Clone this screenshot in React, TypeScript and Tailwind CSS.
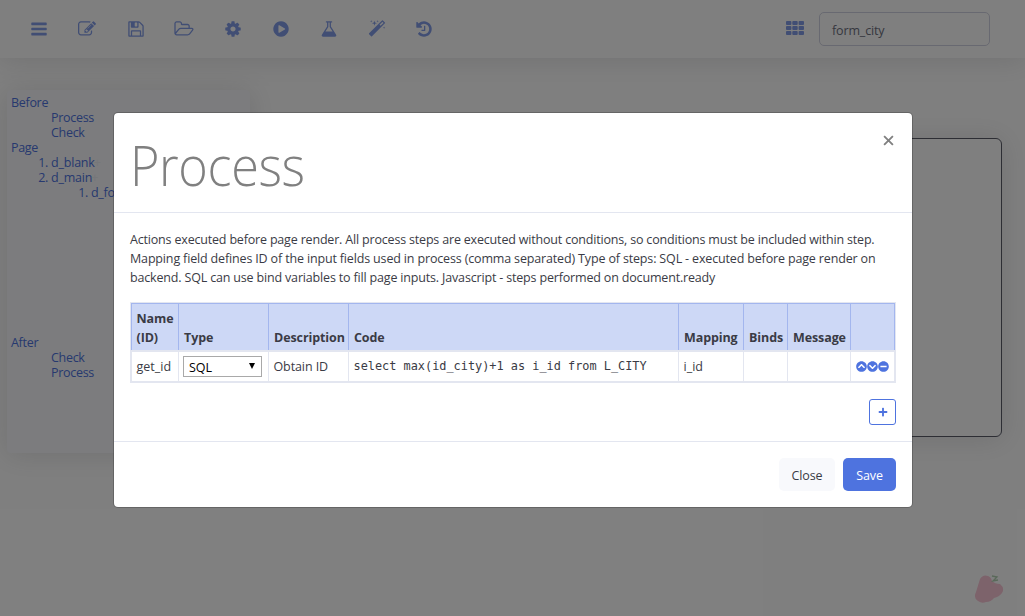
import React from "react";
import { FaChevronCircleUp, FaChevronCircleDown, FaMinusCircle, FaPlus } from "react-icons/fa";

const ICONS = {
  bars: "M1664 1344v128q0 26-19 45t-45 19h-1408q-26 0-45-19t-19-45v-128q0-26 19-45t45-19h1408q26 0 45 19t19 45zm0-512v128q0 26-19 45t-45 19h-1408q-26 0-45-19t-19-45v-128q0-26 19-45t45-19h1408q26 0 45 19t19 45zm0-512v128q0 26-19 45t-45 19h-1408q-26 0-45-19t-19-45v-128q0-26 19-45t45-19h1408q26 0 45 19t19 45z",
  edit: "M888 1184l116-116-152-152-116 116v56h96v96h56zm440-720q-16-16-33 1l-350 350q-17 17-1 33t33-1l350-350q17-17 1-33zm80 594v190q0 119-84.5 203.5t-203.5 84.5h-832q-119 0-203.5-84.5t-84.5-203.5v-832q0-119 84.5-203.5t203.5-84.5h832q63 0 117 25 15 7 18 23 3 17-9 29l-49 49q-14 14-32 8-23-6-45-6h-832q-66 0-113 47t-47 113v832q0 66 47 113t113 47h832q66 0 113-47t47-113v-126q0-13 9-22l64-64q15-15 35-7t20 29zm-96-738l288 288-672 672h-288v-288zm444 132l-92 92-288-288 92-92q28-28 68-28t68 28l152 152q28 28 28 68t-28 68z",
  save: "M512 1536h768v-384h-768v384zm896 0h128v-896q0-14-10-38.5t-20-34.5l-281-281q-10-10-34-20t-39-10v416q0 40-28 68t-68 28h-576q-40 0-68-28t-28-68v-416h-128v1280h128v-416q0-40 28-68t68-28h832q40 0 68 28t28 68v416zm-384-928v-320q0-13-9.5-22.5t-22.5-9.5h-192q-13 0-22.5 9.5t-9.5 22.5v320q0 13 9.5 22.5t22.5 9.5h192q13 0 22.5-9.5t9.5-22.5zm640 32v928q0 40-28 68t-68 28h-1344q-40 0-68-28t-28-68v-1344q0-40 28-68t68-28h928q40 0 88 20t76 48l280 280q28 28 48 76t20 88z",
  folder: "M1717 931q0-35-53-35h-1088q-40 0-85.5 21.5t-71.5 52.5l-294 363q-18 24-18 40 0 35 53 35h1088q40 0 86-22t71-53l294-363q18-22 18-39zm-1141-163h768v-160q0-40-28-68t-68-28h-576q-40 0-68-28t-28-68v-64q0-40-28-68t-68-28h-320q-40 0-68 28t-28 68v853l256-315q44-53 116-87.5t140-34.5zm1269 163q0 62-46 120l-295 363q-43 53-116 87.5t-140 34.5h-1088q-92 0-158-66t-66-158v-960q0-92 66-158t158-66h320q92 0 158 66t66 158v32h544q92 0 158 66t66 158v160h192q54 0 99 24.5t67 70.5q15 32 15 68z",
  cog: "M1152 896q0-106-75-181t-181-75-181 75-75 181 75 181 181 75 181-75 75-181zm512-109v222q0 12-8 23t-20 13l-185 28q-19 54-39 91 35 50 107 138 10 12 10 25t-9 23q-27 37-99 108t-94 71q-12 0-26-9l-138-108q-44 23-91 38-16 136-29 186-7 28-36 28h-222q-14 0-24.5-8.5t-11.5-21.5l-28-184q-49-16-90-37l-141 107q-10 9-25 9-14 0-25-11-126-114-165-168-7-10-7-23 0-12 8-23 15-21 51-66.5t54-70.5q-27-50-41-99l-183-27q-13-2-21-12.5t-8-23.5v-222q0-12 8-23t19-13l186-28q14-46 39-92-40-57-107-138-10-12-10-24 0-10 9-23 26-36 98.5-107.5t94.5-71.5q13 0 26 10l138 107q44-23 91-38 16-136 29-186 7-28 36-28h222q14 0 24.5 8.5t11.5 21.5l28 184q49 16 90 37l142-107q9-9 24-9 13 0 25 10 129 119 165 170 7 8 7 22 0 12-8 23-15 21-51 66.5t-54 70.5q26 50 41 98l183 28q13 2 21 12.5t8 23.5z",
  play: "M896 128q209 0 385.5 103t279.5 279.5 103 385.5-103 385.5-279.5 279.5-385.5 103-385.5-103-279.5-279.5-103-385.5 103-385.5 279.5-279.5 385.5-103zm384 823q32-18 32-55t-32-55l-544-320q-31-19-64-1-32 19-32 56v640q0 37 32 56 16 8 32 8 17 0 32-9z",
  flask: "M1591 1448q56 89 21.5 152.5t-140.5 63.5h-1152q-106 0-140.5-63.5t21.5-152.5l503-793v-399h-64q-26 0-45-19t-19-45 19-45 45-19h512q26 0 45 19t19 45-19 45-45 19h-64v399zm-779-725l-272 429h712l-272-429-20-31v-436h-128v436z",
  magic: "M1254 581l293-293-107-107-293 293zm447-293q0 27-18 45l-1286 1286q-18 18-45 18t-45-18l-198-198q-18-18-18-45t18-45l1286-1286q18-18 45-18t45 18l198 198q18 18 18 45zm-1351-190l98 30-98 30-30 98-30-98-98-30 98-30 30-98zm350 162l196 60-196 60-60 196-60-196-196-60 196-60 60-196zm930 478l98 30-98 30-30 98-30-98-98-30 98-30 30-98zm-640-640l98 30-98 30-30 98-30-98-98-30 98-30 30-98z",
  history: "M1664 896q0 156-61 298t-164 245-245 164-298 61q-172 0-327-72.5t-264-204.5q-7-10-6.5-22.5t8.5-20.5l137-138q10-9 25-9 16 2 23 12 73 95 179 147t225 52q104 0 198.5-40.5t163.5-109.5 109.5-163.5 40.5-198.5-40.5-198.5-109.5-163.5-163.5-109.5-198.5-40.5q-98 0-188 35.5t-160 101.5l137 138q31 30 14 69-17 40-59 40h-448q-26 0-45-19t-19-45v-448q0-42 40-59 39-17 69 14l130 129q107-101 244.5-156.5t284.5-55.5q156 0 298 61t245 164 164 245 61 298zm-640-288v448q0 14-9 23t-23 9h-320q-14 0-23-9t-9-23v-64q0-14 9-23t23-9h224v-352q0-14 9-23t23-9h64q14 0 23 9t9 23z",
};

const NUDGE: Partial<Record<keyof typeof ICONS, string>> = {
  save: "ml-[0.6px]",
  cog: "ml-[0.8px]",
  play: "-ml-[0.8px]",
  history: "-ml-[0.8px]",
};

function Icon({ name }: { name: keyof typeof ICONS }) {
  return (
    <svg
      viewBox="0 0 1792 1792"
      className={"size-[18px] shrink-0 overflow-visible " + (NUDGE[name] ?? "")}
      fill="currentColor"
    >
      <path d={ICONS[name]} />
    </svg>
  );
}

function TopBar() {
  const names = Object.keys(ICONS) as (keyof typeof ICONS)[];
  return (
    <header className="relative flex h-[58px] items-center bg-white pr-[35px] pl-[30px] text-[#4e73df] shadow-[0_2px_28px_rgba(58,59,69,0.15)]">
      <nav className="mb-px flex flex-1 gap-[30.2px] opacity-70">
        {names.map((n) => (
          <Icon key={n} name={n} />
        ))}
      </nav>
      <svg viewBox="0 0 18 14" className="mr-[15px] mb-[2px] h-[14px] w-[18px] opacity-70" fill="currentColor">
        {[0, 5, 10].map((y) =>
          [0, 6.3, 12.6].map((x) => <rect key={x + "-" + y} x={x} y={y} width="5.4" height="4" rx="0.9" />)
        )}
      </svg>
      <div className="flex h-[34px] w-[171px] items-center rounded-[5px] border border-[#d1d3e2] px-3 pt-[4px] text-[12.5px] tracking-[-0.15px] text-[#6e707e]">
        form_city
      </div>
    </header>
  );
}

function Sidebar() {
  return (
    <aside className="mt-8 ml-[7px] h-[363px] w-[243px] rounded bg-[#f8f9fc] pt-[5px] pl-1 text-[12.5px] leading-[15px] tracking-[-0.3px] text-[#4e73df] shadow-[0_2px_28px_rgba(58,59,69,0.15)]">
      <div>Before</div>
      <div className="pl-10">Process</div>
      <div className="pl-10">Check</div>
      <div>Page</div>
      <ol className="list-decimal pl-10">
        <li>
          <span className="tracking-[-0.2px]">d_blank</span> <span className="-ml-1 text-[#eceef5]">+</span>
        </li>
        <li>
          <span className="tracking-[-0.2px]">d_main</span> <span className="-ml-1 text-[#eceef5]">+</span>
          <ol className="list-decimal pl-10">
            <li>d_form</li>
          </ol>
        </li>
      </ol>
      <div className="mt-[135px]">After</div>
      <div className="pl-10">Check</div>
      <div className="pl-10">Process</div>
    </aside>
  );
}

const COLS = "grid grid-cols-[48px_90px_80px_330px_65px_44px_63px_44px]";
const HEADERS = ["Name (ID)", "Type", "Description", "Code", "Mapping", "Binds", "Message", ""];

function StepsTable() {
  const cell = "flex items-center border-r border-[#e3e6f0] pl-[4.5px] whitespace-nowrap";
  return (
    <div className="w-[766px] border border-[#e3e6f0]">
      <div className={COLS + " h-[47px] border-t border-l border-[#a3b6ee] bg-[#cdd8f6] font-bold tracking-[-0.1px]"}>
        {HEADERS.map((h, i) => (
          <div
            key={i}
            className="-ml-px flex w-full items-end border-r border-[#a3b6ee] pb-[3px] pl-[5px] leading-[19px] first:pl-[5.5px]"
          >
            {h}
          </div>
        ))}
      </div>
      <div className={COLS + " h-[31px] border-t-2 border-[#e3e6f0]"}>
        <div className={cell + " border-l pt-px"}>get_id</div>
        <div className={cell + " !pl-1"}>
          <div className="flex h-[21px] w-[79px] items-center justify-between border border-[#a9a9a9] pr-[6px] pl-[5px] text-black">
            <span className="pt-[3px]">SQL</span>
            <svg viewBox="0 0 6 6" className="mb-[2px] size-[6px]">
              <path d="M0 0H6L3 6Z" />
            </svg>
          </div>
        </div>
        <div className={cell + " pt-px tracking-[-0.1px]"}>Obtain ID</div>
        <div className={cell + " font-['DejaVu_Sans_Mono',monospace] text-[11.88px]"}>select max(id_city)+1 as i_id from L_CITY</div>
        <div className={cell + " pt-px"}>i_id</div>
        <div className={cell} />
        <div className={cell} />
        <div className={cell + " text-[11px] text-[#4e73df]"}>
          <FaChevronCircleUp />
          <FaChevronCircleDown />
          <FaMinusCircle />
        </div>
      </div>
      <div className="h-px bg-[#e3e6f0]" />
    </div>
  );
}

function ProcessDialog() {
  return (
    <section className="absolute top-[112px] left-[113px] flex h-[396px] w-[800px] flex-col rounded-[5px] border border-black/20 bg-white bg-clip-padding text-[12.5px] text-[#3a3b45]">
      <div className="flex h-[100px] items-start justify-between border-b border-[#e3e6f0] pr-[18px] pl-4 text-[#808080]">
        <h1 className="origin-left scale-x-[0.925] pt-[19px] text-[54.5px] leading-[67px] font-light tracking-[-0.4px]">Process</h1>
        <svg viewBox="0 0 10 10" className="mt-[22px] size-[11px]" stroke="currentColor" strokeWidth="1.7">
          <path d="M1 1L9 9M9 1L1 9" />
        </svg>
      </div>
      <div className="flex h-[229px] flex-col border-b border-[#e3e6f0] px-4 pt-[17px]">
        <div className="mb-[15px] leading-[19px] whitespace-nowrap">
          <p className="tracking-[-0.182px]">
            Actions executed before page render. All process steps are executed without conditions, so conditions must be included within step.
          </p>
          <p className="tracking-[-0.155px]">
            Mapping field defines ID of the input fields used in process (comma separated) Type of steps: SQL - executed before page render on
          </p>
          <p className="tracking-[-0.17px]">
            backend. SQL can use bind variables to fill page inputs. Javascript - steps performed on document.ready
          </p>
        </div>
        <StepsTable />
        <button className="mt-4 flex h-[26px] w-[27px] items-center justify-center self-end rounded-[3px] border border-[#4e73df] text-[10px] text-[#4e73df]">
          <FaPlus />
        </button>
      </div>
      <div className="flex justify-end gap-2 px-4 pt-4">
        <button className="h-[33px] w-14 rounded-[5px] bg-[#f8f9fc] pt-[3px] tracking-[-0.1px]">Close</button>
        <button className="h-[33px] w-[53px] rounded-[5px] bg-[#4e73df] pt-[3px] tracking-[-0.1px] text-white">Save</button>
      </div>
    </section>
  );
}

export default function App() {
  return (
    <div className="relative h-[616px] w-[1025px] overflow-hidden bg-white font-['Open_Sans',sans-serif]">
      <TopBar />
      <main className="flex justify-between pr-[23px]">
        <Sidebar />
        <div className="mt-20 h-[299px] w-[730px] rounded-md border border-[#5a5c69] bg-white shadow-[0_2px_28px_rgba(58,59,69,0.15)]" />
      </main>
      <svg viewBox="0 0 30 30" className="absolute top-[574px] left-[974px] size-[30px]">
        <path
          d="M6 5Q9 0 14 2Q17 3 18 7Q21 10 26 10Q31 14 28 19Q25 23 20 24Q17 28 12 28Q8 30 4 27Q-1 24 2 18Z"
          fill="#fac6d6"
        />
        <path d="M18 2L23 3L19 7L24 6" fill="none" stroke="#b4d2b4" strokeWidth="1.3" />
      </svg>
      <div className="absolute inset-0 bg-black/50" />
      <ProcessDialog />
    </div>
  );
}
